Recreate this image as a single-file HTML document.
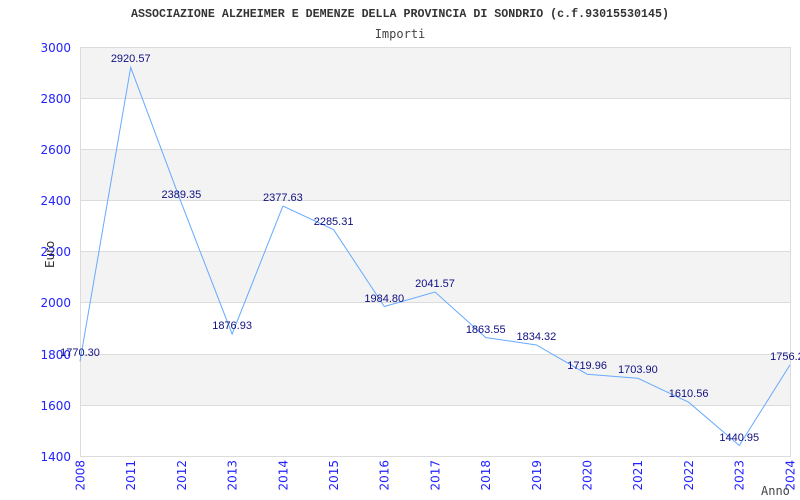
<!DOCTYPE html>
<html><head><meta charset="utf-8"><style>
html,body{margin:0;padding:0;background:#fff;width:800px;height:500px;overflow:hidden}
</style></head><body>
<svg width="800" height="500" xmlns="http://www.w3.org/2000/svg">
<rect width="800" height="500" fill="#fff"/>
<g fill="#f3f3f3">
<rect x="80" y="47" width="710" height="51"/>
<rect x="80" y="149" width="710" height="51"/>
<rect x="80" y="251" width="710" height="51"/>
<rect x="80" y="354" width="710" height="51"/>
</g>
<g stroke="#dcdcdc" stroke-width="1">
<line x1="80" y1="47.5" x2="790" y2="47.5"/>
<line x1="80" y1="98.5" x2="790" y2="98.5"/>
<line x1="80" y1="149.5" x2="790" y2="149.5"/>
<line x1="80" y1="200.5" x2="790" y2="200.5"/>
<line x1="80" y1="251.5" x2="790" y2="251.5"/>
<line x1="80" y1="302.5" x2="790" y2="302.5"/>
<line x1="80" y1="354.5" x2="790" y2="354.5"/>
<line x1="80" y1="405.5" x2="790" y2="405.5"/>
<line x1="80" y1="456.5" x2="790" y2="456.5"/>
<line x1="80.5" y1="47" x2="80.5" y2="457"/>
<line x1="790.5" y1="47" x2="790.5" y2="457"/>
</g>
<text x="400" y="17" text-anchor="middle" font-family="Liberation Mono, monospace" font-size="11.65" font-weight="bold" fill="#333">ASSOCIAZIONE ALZHEIMER E DEMENZE DELLA PROVINCIA DI SONDRIO (c.f.93015530145)</text>
<text x="400" y="38" text-anchor="middle" font-family="DejaVu Sans Mono, monospace" font-size="12" fill="#444">Importi</text>
<g font-family="DejaVu Sans, sans-serif" font-size="12" fill="#2222ff" text-anchor="end">
<text x="71" y="52">3000</text>
<text x="71" y="103">2800</text>
<text x="71" y="154">2600</text>
<text x="71" y="205">2400</text>
<text x="71" y="256">2200</text>
<text x="71" y="307">2000</text>
<text x="71" y="359">1800</text>
<text x="71" y="410">1600</text>
<text x="71" y="461">1400</text>
</g>
<text transform="translate(54,268) rotate(-90)" font-family="DejaVu Sans, sans-serif" font-size="12" fill="#333">Euro</text>
<g font-family="DejaVu Sans, sans-serif" font-size="12" fill="#2222ff" text-anchor="end">
<text transform="translate(84.5,460) rotate(-90)">2008</text>
<text transform="translate(135.2,460) rotate(-90)">2011</text>
<text transform="translate(185.9,460) rotate(-90)">2012</text>
<text transform="translate(236.6,460) rotate(-90)">2013</text>
<text transform="translate(287.3,460) rotate(-90)">2014</text>
<text transform="translate(338,460) rotate(-90)">2015</text>
<text transform="translate(388.7,460) rotate(-90)">2016</text>
<text transform="translate(439.4,460) rotate(-90)">2017</text>
<text transform="translate(490.1,460) rotate(-90)">2018</text>
<text transform="translate(540.8,460) rotate(-90)">2019</text>
<text transform="translate(591.5,460) rotate(-90)">2020</text>
<text transform="translate(642.2,460) rotate(-90)">2021</text>
<text transform="translate(692.9,460) rotate(-90)">2022</text>
<text transform="translate(743.6,460) rotate(-90)">2023</text>
<text transform="translate(794.3,460) rotate(-90)">2024</text>
</g>
<text x="761" y="495" font-family="DejaVu Sans Mono, monospace" font-size="12" fill="#444">Anno</text>
<polyline fill="none" stroke="#66aaff" stroke-width="1" points="80,361.3 130.7,67.4 181.4,203.1 232.1,334.1 282.9,206.1 333.6,229.7 384.3,306.5 435,292 485.7,337.5 536.4,345 587.1,374.2 637.9,378.3 688.6,402.2 739.3,445.5 790,364.9"/>
<g font-family="Liberation Sans, Arial, sans-serif" font-size="11" fill="#101080" text-anchor="middle">
<text x="80" y="356">1770.30</text>
<text x="130.7" y="62">2920.57</text>
<text x="181.4" y="198">2389.35</text>
<text x="232.1" y="329">1876.93</text>
<text x="282.9" y="201">2377.63</text>
<text x="333.6" y="225">2285.31</text>
<text x="384.3" y="302">1984.80</text>
<text x="435" y="287">2041.57</text>
<text x="485.7" y="333">1863.55</text>
<text x="536.4" y="340">1834.32</text>
<text x="587.1" y="369">1719.96</text>
<text x="637.9" y="373">1703.90</text>
<text x="688.6" y="397">1610.56</text>
<text x="739.3" y="441">1440.95</text>
<text x="790" y="360">1756.25</text>
</g>
</svg>
</body></html>
